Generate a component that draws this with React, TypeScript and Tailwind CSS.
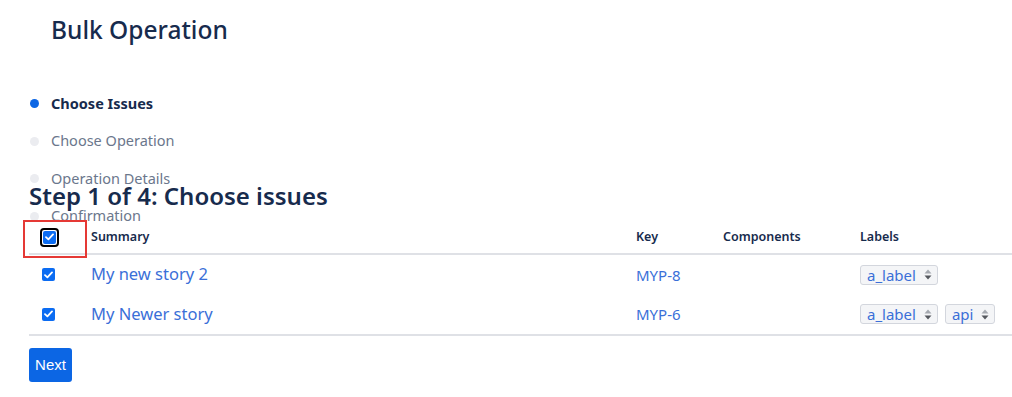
import React from "react";

const steps = [
  { name: "Choose Issues", active: true },
  { name: "Choose Operation", active: false },
  { name: "Operation Details", active: false },
  { name: "Confirmation", active: false },
];

const issues = [
  { summary: "My new story 2", key: "MYP-8", labels: ["a_label"] },
  { summary: "My Newer story", key: "MYP-6", labels: ["a_label", "api"] },
];

function Check() {
  return (
    <span className="flex w-[13px] h-[13px] items-center justify-center rounded-[2px] bg-[#0b6cf2]">
      <svg width="9" height="8" viewBox="0 0 9 8" fill="none">
        <path d="M1 4.2 L3.4 6.4 L8 1.4" stroke="white" strokeWidth="1.8" strokeLinecap="round" strokeLinejoin="round" />
      </svg>
    </span>
  );
}

function Label({ text }: { text: string }) {
  return (
    <span className="flex h-[20px] items-center gap-[8px] rounded-[3px] border border-[#d3d6dd] bg-[#f4f5f7] pl-[6px] pr-[5px] text-[15px] text-[#3a6fd8]">
      {text}
      <svg width="8" height="11" viewBox="0 0 8 11">
        <path d="M4 0.5 L7.5 4.5 H0.5 Z" fill="#a5a9b0" />
        <path d="M4 10.5 L7.5 6.5 H0.5 Z" fill="#55585e" />
      </svg>
    </span>
  );
}

export default function App() {
  return (
    <div className="min-h-[397px] bg-white pl-[29px] pt-[1px] text-[#172b4d]" style={{ fontFamily: '"Noto Sans", "Open Sans", sans-serif' }}>
      <h1 className="pt-[13px] pl-[22px] text-[24.5px] leading-[32px] font-medium">Bulk Operation</h1>

      <ul className="mt-[39px] h-[95px]">
        {steps.map((s) => (
          <li key={s.name} className="flex h-[37.5px] items-center">
            <span className={`ml-[1px] h-[9px] w-[9px] rounded-full ${s.active ? "bg-[#0c66e4]" : "bg-[#ebecf0]"}`} />
            <span className={`ml-[12px] text-[14.5px] ${s.active ? "font-bold text-[#172b4d]" : "text-[#6b778c]"}`}>
              {s.name}
            </span>
          </li>
        ))}
      </ul>

      <h2 className="relative text-[24px] leading-[32px] font-semibold">Step 1 of 4: Choose issues</h2>

      <div className="mt-[9px]">
        <div className="grid h-[34px] grid-cols-[62px_545px_87px_137px_1fr] items-center border-b-2 border-[#dfe1e6] text-[12.5px] font-semibold">
          <div className="relative flex h-full items-center">
            <span className="ml-[11px] flex h-[19px] w-[19px] items-center justify-center rounded-[4px] border-2 border-black">
              <Check />
            </span>
            <span className="absolute left-[-6px] top-[-1px] h-[38px] w-[64px] border-2 border-[#e53935]" />
          </div>
          <div>Summary</div>
          <div>Key</div>
          <div>Components</div>
          <div>Labels</div>
        </div>

        <div className="border-b-2 border-[#dfe1e6]">
          {issues.map((i) => (
            <div key={i.key} className="grid h-[39.5px] grid-cols-[62px_545px_87px_137px_1fr] items-center text-[15px] text-[#3a6fd8]">
              <div className="pl-[13px]">
                <Check />
              </div>
              <div className="text-[16.5px]">{i.summary}</div>
              <div>{i.key}</div>
              <div />
              <div className="flex gap-[7px]">
                {i.labels.map((l) => (
                  <Label key={l} text={l} />
                ))}
              </div>
            </div>
          ))}
        </div>
      </div>

      <button
        className="mt-[12px] h-[34px] w-[43px] rounded-[3px] bg-[#0c66e4] text-[15px] text-white"
        style={{ fontFamily: '"Liberation Sans", Arial, sans-serif' }}
      >
        Next
      </button>
    </div>
  );
}
